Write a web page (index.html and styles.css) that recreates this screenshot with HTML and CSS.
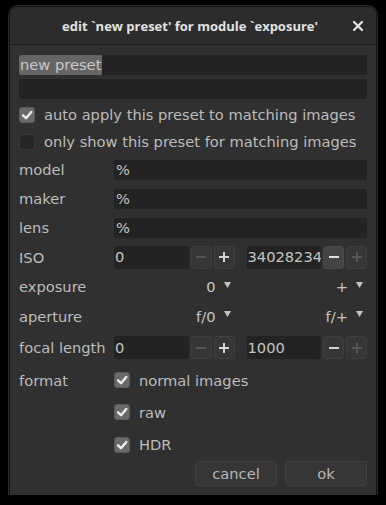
FILE: index.html
```html
<!DOCTYPE html>
<html lang="en">
<head>
<meta charset="UTF-8">
<title>edit preset</title>
<link rel="stylesheet" href="styles.css">
</head>
<body>
    <div class="dialog">
        <!-- Title bar -->
        <div class="titlebar">
            <span class="title">edit `new preset' for module `exposure'</span>
            <svg class="close" width="12" height="12" viewBox="0 0 12 12">
                <path d="M2 2 L10 10 M10 2 L2 10" stroke="#e6e6e6" stroke-width="2.2" stroke-linecap="round"/>
            </svg>
        </div>

        <div class="content">
            <div class="entries">
                <div class="entry"><span class="selected">new preset</span></div>
                <div class="entry"></div>
            </div>

            <div class="check-row">
                <span class="checkbox checked">
                    <svg width="16" height="16" viewBox="0 0 16 16"><path d="M4 8.3 L7 11.2 L12.3 5" fill="none" stroke="#ececec" stroke-width="2.4" stroke-linecap="round" stroke-linejoin="round"/></svg>
                </span>
                auto apply this preset to matching images
            </div>
            <div class="check-row">
                <span class="checkbox"></span>
                only show this preset for matching images
            </div>

            <!-- Filter rules -->
            <div class="rules">
                <span class="label">model</span>
                <div class="entry">%</div>

                <span class="label">maker</span>
                <div class="entry">%</div>

                <span class="label">lens</span>
                <div class="entry">%</div>

                <span class="label">ISO</span>
                <div class="range">
                    <div class="spin">
                        <div class="entry">0</div>
                        <span class="spin-btn dim"><svg width="12" height="12" viewBox="0 0 12 12"><path d="M1 6 H11" stroke="currentColor" stroke-width="2"/></svg></span>
                        <span class="spin-btn"><svg width="12" height="12" viewBox="0 0 12 12"><path d="M1 6 H11 M6 1 V11" stroke="currentColor" stroke-width="2"/></svg></span>
                    </div>
                    <div class="spin">
                        <div class="entry">34028234</div>
                        <span class="spin-btn hot"><svg width="12" height="12" viewBox="0 0 12 12"><path d="M1 6 H11" stroke="currentColor" stroke-width="2"/></svg></span>
                        <span class="spin-btn dim"><svg width="12" height="12" viewBox="0 0 12 12"><path d="M1 6 H11 M6 1 V11" stroke="currentColor" stroke-width="2"/></svg></span>
                    </div>
                </div>

                <span class="label">exposure</span>
                <div class="range">
                    <div class="combo">0 <svg class="arrow" width="7" height="6" viewBox="0 0 7 6"><path d="M0 0 H7 L3.5 6 Z" fill="currentColor"/></svg></div>
                    <div class="combo">+ <svg class="arrow" width="7" height="6" viewBox="0 0 7 6"><path d="M0 0 H7 L3.5 6 Z" fill="currentColor"/></svg></div>
                </div>

                <span class="label">aperture</span>
                <div class="range">
                    <div class="combo">f/0 <svg class="arrow" width="7" height="6" viewBox="0 0 7 6"><path d="M0 0 H7 L3.5 6 Z" fill="currentColor"/></svg></div>
                    <div class="combo">f/+ <svg class="arrow" width="7" height="6" viewBox="0 0 7 6"><path d="M0 0 H7 L3.5 6 Z" fill="currentColor"/></svg></div>
                </div>

                <span class="label">focal length</span>
                <div class="range">
                    <div class="spin">
                        <div class="entry">0</div>
                        <span class="spin-btn dim"><svg width="12" height="12" viewBox="0 0 12 12"><path d="M1 6 H11" stroke="currentColor" stroke-width="2"/></svg></span>
                        <span class="spin-btn"><svg width="12" height="12" viewBox="0 0 12 12"><path d="M1 6 H11 M6 1 V11" stroke="currentColor" stroke-width="2"/></svg></span>
                    </div>
                    <div class="spin">
                        <div class="entry">1000</div>
                        <span class="spin-btn"><svg width="12" height="12" viewBox="0 0 12 12"><path d="M1 6 H11" stroke="currentColor" stroke-width="2"/></svg></span>
                        <span class="spin-btn dim"><svg width="12" height="12" viewBox="0 0 12 12"><path d="M1 6 H11 M6 1 V11" stroke="currentColor" stroke-width="2"/></svg></span>
                    </div>
                </div>

                <span class="label">format</span>
                <div class="check-row">
                    <span class="checkbox checked"><svg width="16" height="16" viewBox="0 0 16 16"><path d="M4 8.3 L7 11.2 L12.3 5" fill="none" stroke="#ececec" stroke-width="2.4" stroke-linecap="round" stroke-linejoin="round"/></svg></span>
                    normal images
                </div>

                <span class="label"></span>
                <div class="check-row">
                    <span class="checkbox checked"><svg width="16" height="16" viewBox="0 0 16 16"><path d="M4 8.3 L7 11.2 L12.3 5" fill="none" stroke="#ececec" stroke-width="2.4" stroke-linecap="round" stroke-linejoin="round"/></svg></span>
                    raw
                </div>

                <span class="label"></span>
                <div class="check-row">
                    <span class="checkbox checked"><svg width="16" height="16" viewBox="0 0 16 16"><path d="M4 8.3 L7 11.2 L12.3 5" fill="none" stroke="#ececec" stroke-width="2.4" stroke-linecap="round" stroke-linejoin="round"/></svg></span>
                    HDR
                </div>
            </div>

            <!-- Buttons -->
            <div class="actions">
                <button>cancel</button>
                <button>ok</button>
            </div>
        </div>
    </div>
</body>
</html>
```

FILE: styles.css
```css
/* General */
* {
    margin: 0;
    padding: 0;
    box-sizing: border-box;
}

body {
    background: #000;
    font-family: 'DejaVu Sans', sans-serif;
    font-size: 11pt;
    color: #bcbcbc;
}

/* Dialog frame */
.dialog {
    width: 366px;
    height: 488px;
    margin: 7px 0 0 10px;
    background: #303030;
    border-radius: 8px 8px 0 0;
    box-shadow: 0 0 0 1px #121212, 0 0 0 2px #2a2a2a;
    display: flex;
    flex-direction: column;
}

.titlebar {
    height: 38px;
    display: flex;
    align-items: center;
    justify-content: center;
    position: relative;
    background: #2c2c2c;
    border-radius: 8px 8px 0 0;
    border-bottom: 1px solid #1c1c1c;
}

.title {
    font-family: 'Open Sans', sans-serif;
    font-weight: 700;
    font-size: 13px;
    color: #e2e2e2;
    margin-left: -6px;
}

.close {
    position: absolute;
    right: 12px;
    top: 13px;
}

/* Content */
.content {
    flex: 1;
    padding: 10px 9px 9px;
    display: flex;
    flex-direction: column;
}

.entries {
    display: flex;
    flex-direction: column;
    gap: 4px;
    margin-bottom: 2px;
}

.entries .entry {
    padding: 0;
}

.entry {
    height: 20px;
    background: #232323;
    border-radius: 2px;
    padding: 0 2px;
    display: flex;
    align-items: center;
    color: #c4c4c4;
    line-height: 20px;
    overflow: hidden;
    white-space: nowrap;
}

.selected {
    background: #656565;
    color: #c8c8c8;
    padding: 0 1px;
}

.check-row {
    height: 27px;
    display: flex;
    align-items: center;
    gap: 9px;
}

.checkbox {
    width: 16px;
    height: 16px;
    border-radius: 3px;
    background: #262626;
    border: 1px solid #3a3a3a;
    display: flex;
}

.checkbox.checked {
    background: #696969;
    border-color: #5a5a5a;
}

.checkbox svg {
    margin: -1px;
}

/* Rules grid */
.rules {
    display: grid;
    grid-template-columns: 95px minmax(0, 1fr);
    grid-template-rows: 29px 29px 29px 30px 29px 30px 33px 32px 32px 33px;
    align-items: center;
}

.rules .check-row {
    height: auto;
}

.range {
    display: grid;
    grid-template-columns: minmax(0, 1fr) minmax(0, 1fr);
    gap: 12px;
}

.spin {
    display: flex;
    gap: 2px;
    height: 23px;
    min-width: 0;
}

.spin .entry {
    flex: 1;
    min-width: 0;
    height: 23px;
    padding: 0 1px;
}

.spin-btn {
    flex: none;
    width: 21px;
    height: 23px;
    border-radius: 3px;
    background: #363636;
    border: 1px solid #3e3e3e;
    display: flex;
    align-items: center;
    justify-content: center;
    color: #d4d4d4;
}

.spin-btn.dim {
    color: #555;
}

.spin-btn.hot {
    background: #444;
    border-color: #4a4a4a;
    color: #e0e0e0;
}

.combo {
    display: flex;
    justify-content: flex-end;
    align-items: center;
    gap: 8px;
    padding-right: 4px;
    color: #c4c4c4;
}

.arrow {
    margin-top: -4px;
}

/* Buttons */
.actions {
    display: flex;
    justify-content: flex-end;
    gap: 8px;
}

.actions button {
    width: 82px;
    height: 25px;
    background: #363636;
    border: 1px solid #404040;
    border-radius: 3px;
    font-family: 'DejaVu Sans', sans-serif;
    font-size: 11pt;
    color: #b8b8b8;
}
```
